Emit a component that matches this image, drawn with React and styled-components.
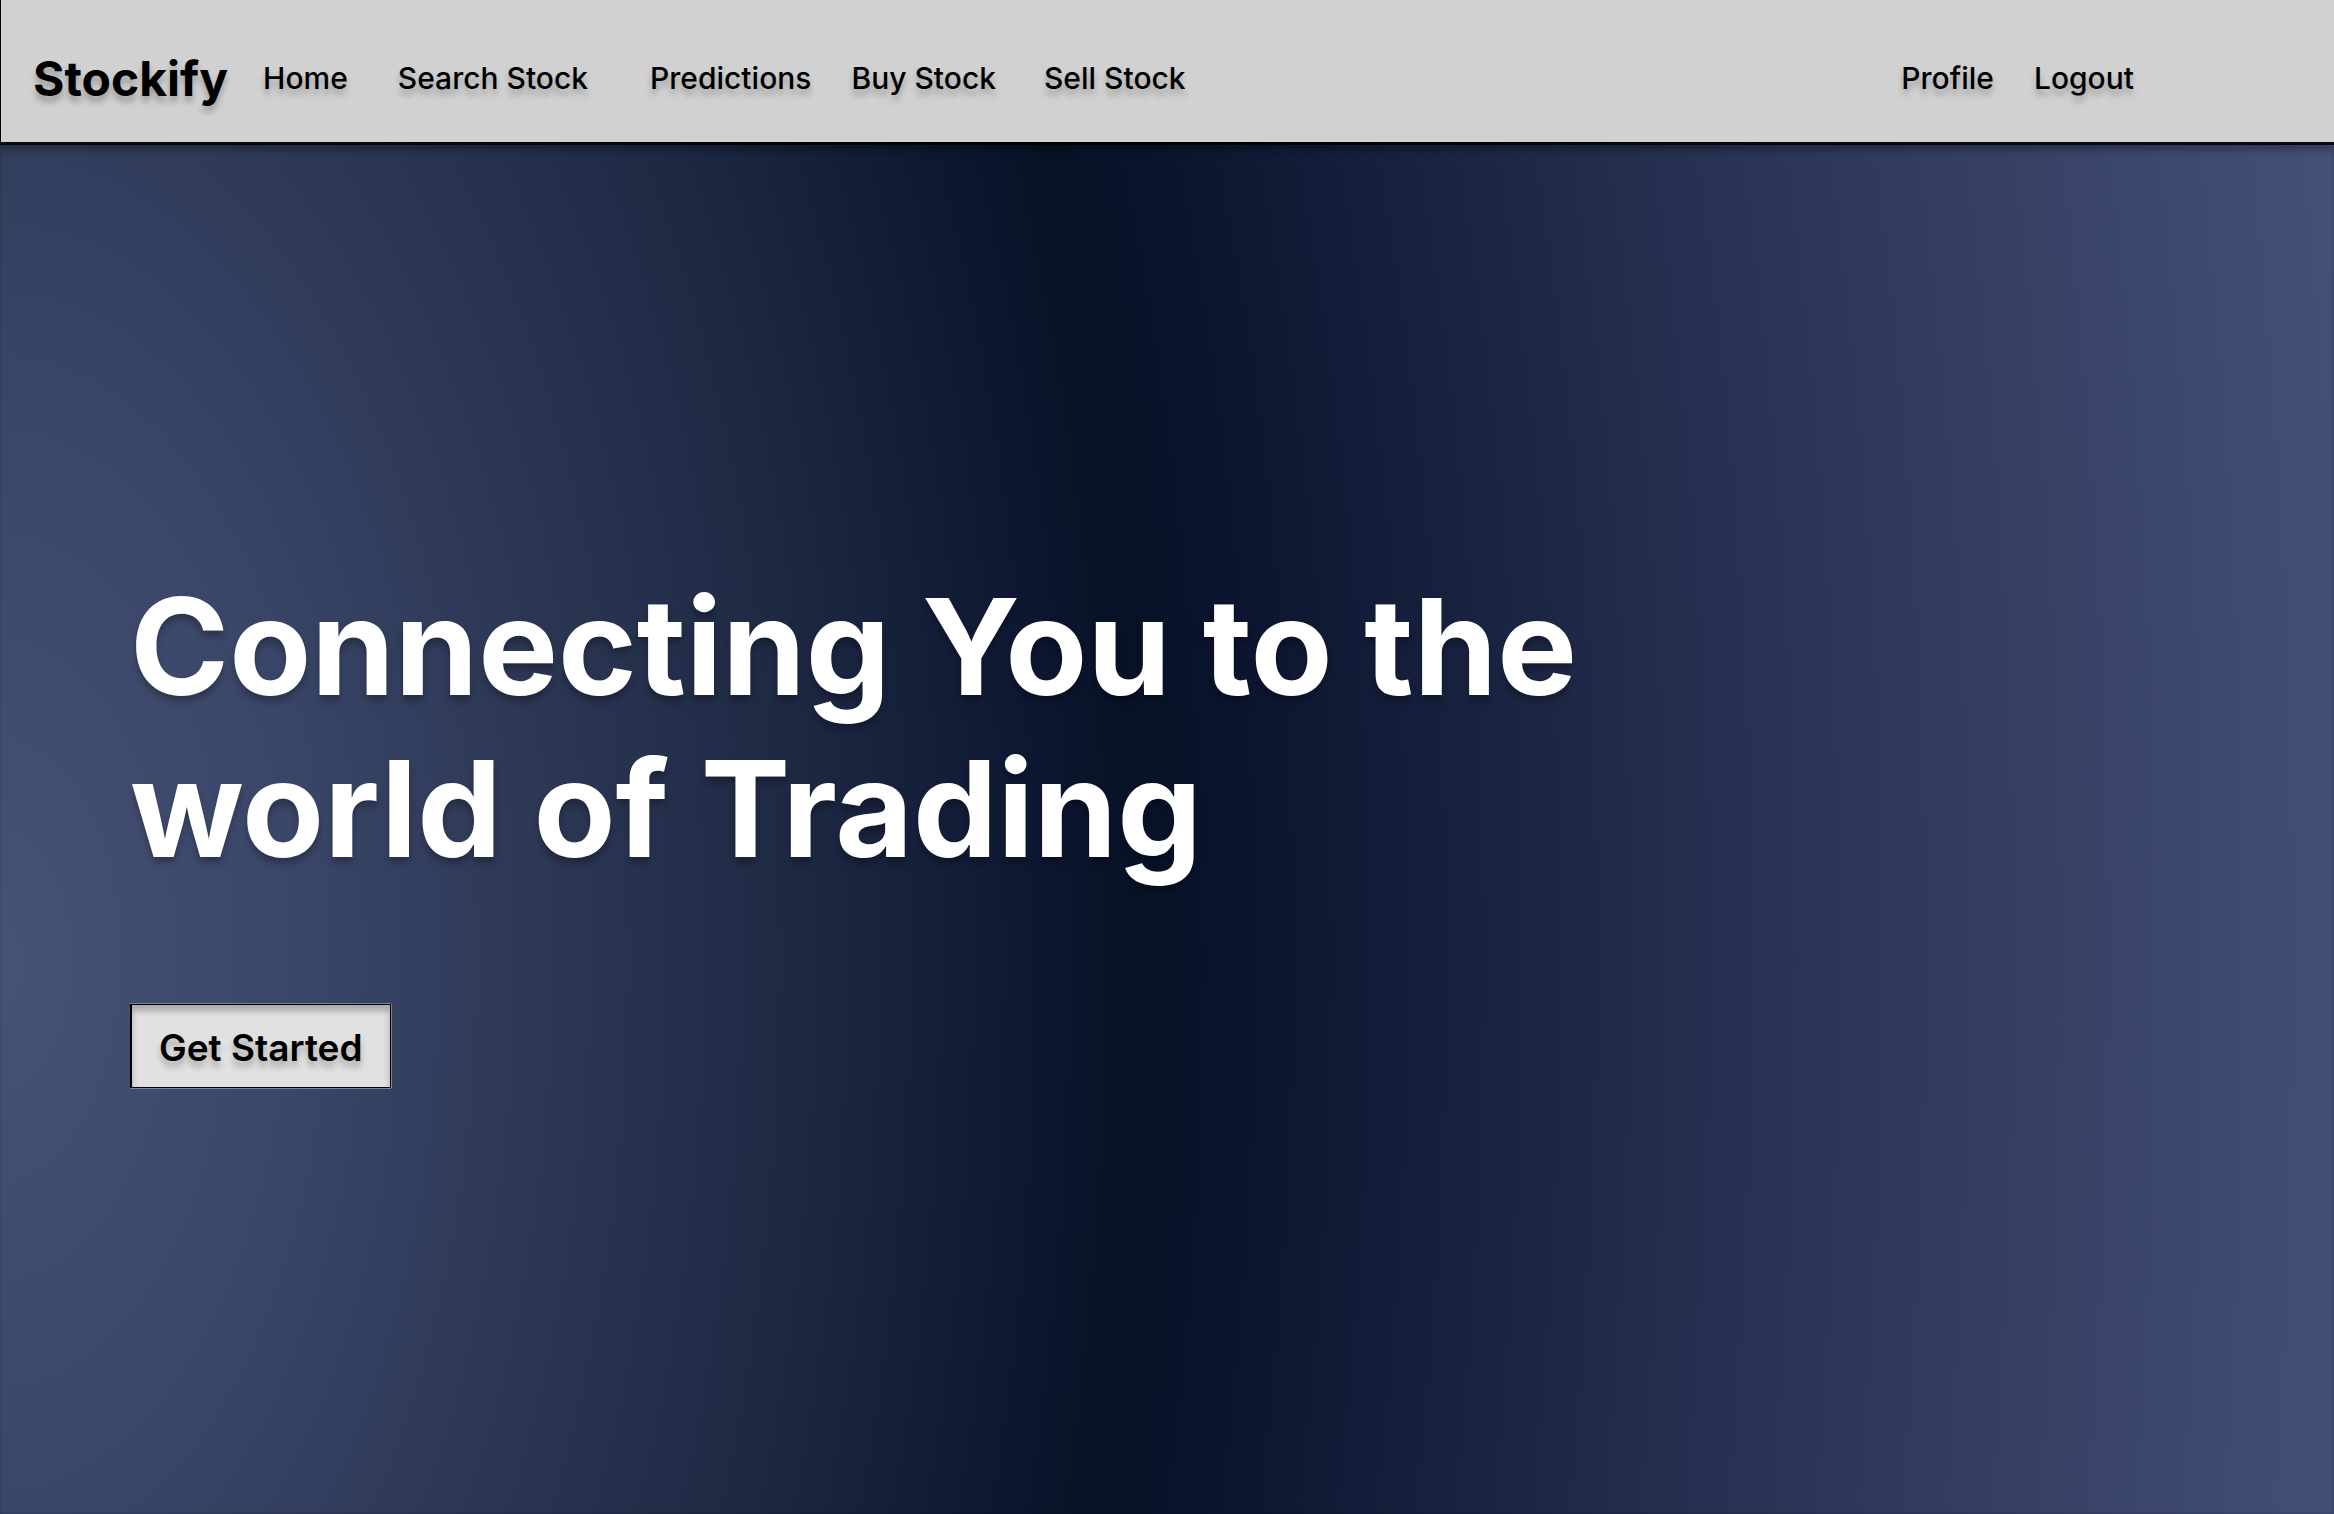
import React from "react";
import styled, { createGlobalStyle } from "styled-components";

const GlobalStyle = createGlobalStyle`
  *, *::before, *::after { box-sizing: border-box; }
  body {
    margin: 0;
    font-family: Inter, "Liberation Sans", sans-serif;
  }
`;

const Page = styled.div`
  display: flex;
  flex-direction: column;
  min-height: 100vh;
  background: radial-gradient(
    ellipse 2372px 4350px at 0 960px,
    #465276 0%,
    #3b4769 12%,
    #2b3653 24%,
    #1d2843 34%,
    #0d1731 44%,
    #071226 48%,
    #0a142e 52%,
    #1f2947 67%,
    #343e62 84%,
    #455079 100%
  );
  box-shadow: inset 0 0 3px rgba(0, 0, 0, 0.25);
`;

const Header = styled.header`
  display: flex;
  align-items: center;
  justify-content: space-between;
  height: 145px;
  padding: 13px 200px 0 32px;
  background: #d1d1d1;
  background-clip: padding-box;
  border-left: 1px solid #000;
  border-bottom: 3px solid rgba(0, 0, 0, 0.85);
  box-shadow: 0 6px 6px rgba(0, 0, 0, 0.25);
`;

const Nav = styled.nav`
  display: flex;
  align-items: center;
`;

const Brand = styled.a`
  margin-right: 35px;
  padding-top: 2px;
  color: #000;
  font-size: 48px;
  line-height: 60px;
  font-weight: 700;
  text-decoration: none;
  text-shadow: 0 6px 6px rgba(0, 0, 0, 0.25);
`;

const NavLink = styled.a`
  margin-left: ${({ $gap }) => $gap}px;
  color: #000;
  font-size: 30px;
  line-height: 36px;
  font-weight: 500;
  text-decoration: none;
  text-shadow: 0 6px 6px rgba(0, 0, 0, 0.25);
`;

const Hero = styled.main`
  display: flex;
  flex-direction: column;
  align-items: flex-start;
  padding: 420px 130px 0;
`;

const Title = styled.h1`
  margin: 0;
  max-width: 1600px;
  color: #fff;
  font-size: 134px;
  line-height: 162px;
  font-weight: 700;
  text-shadow: 0 6px 6px rgba(0, 0, 0, 0.25);
`;

const StartButton = styled.button`
  margin-top: 115px;
  height: 84px;
  padding: 4px 27px 0;
  border: 1px solid #000;
  border-left-width: 2px;
  border-radius: 0;
  background: #e1e1e1;
  box-shadow: 0 -1px #7b8296, 1px 0 #7b8296, 0 1px #7b8296,
    inset 0 6px 6px rgba(0, 0, 0, 0.25);
  color: #000;
  font: 600 37px/44px Inter, "Liberation Sans", sans-serif;
  text-shadow: 0 6px 6px rgba(0, 0, 0, 0.25);
  cursor: pointer;
`;

const mainLinks = [
  { label: "Home", gap: 0 },
  { label: "Search Stock", gap: 50 },
  { label: "Predictions", gap: 62 },
  { label: "Buy Stock", gap: 40 },
  { label: "Sell Stock", gap: 48 },
];

const accountLinks = [
  { label: "Profile", gap: 0 },
  { label: "Logout", gap: 40 },
];

const Links = ({ items }) =>
  items.map(({ label, gap }) => (
    <NavLink key={label} href="#" $gap={gap}>
      {label}
    </NavLink>
  ));

export default function App() {
  return (
    <>
      <GlobalStyle />
      <Page>
        <Header>
          <Nav aria-label="Main">
            <Brand href="#">Stockify</Brand>
            <Links items={mainLinks} />
          </Nav>
          <Nav aria-label="Account">
            <Links items={accountLinks} />
          </Nav>
        </Header>
        <Hero>
          <Title>Connecting You to the world of Trading</Title>
          <StartButton type="button">Get Started</StartButton>
        </Hero>
      </Page>
    </>
  );
}
